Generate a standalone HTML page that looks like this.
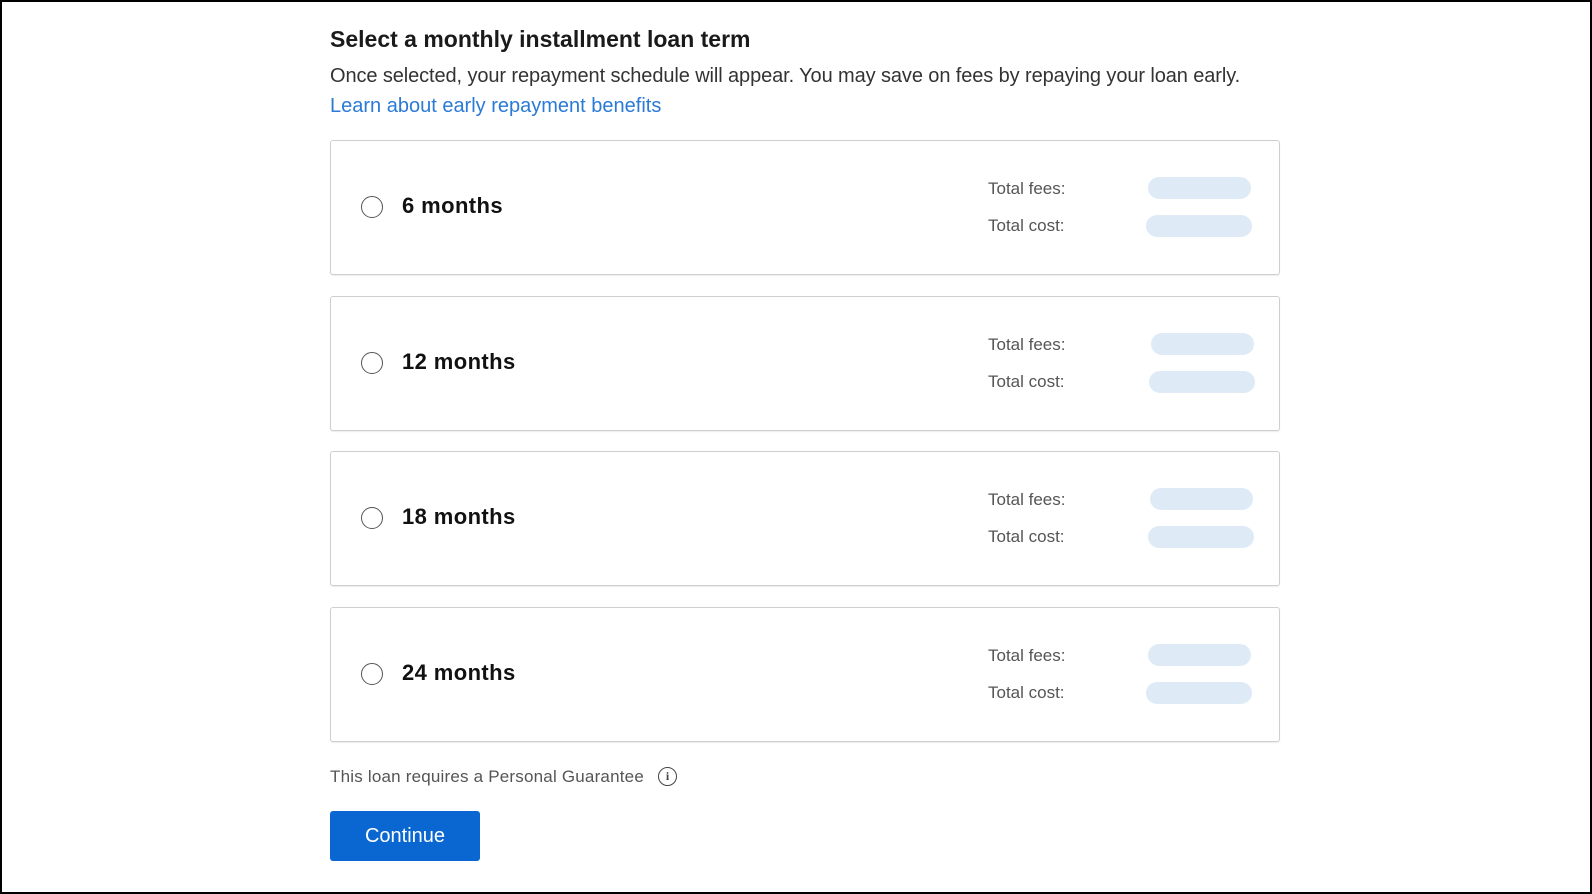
<!DOCTYPE html>
<html><head><meta charset="utf-8"><style>
html,body{margin:0;padding:0}
body{width:1592px;height:894px;background:#000;position:relative;overflow:hidden;font-family:"Liberation Sans",sans-serif}
.page{position:absolute;left:2px;top:2px;width:1588px;height:890px;background:#fff}
.abs{position:absolute;white-space:nowrap}
.title{left:328px;top:24px;font-size:23px;font-weight:bold;color:#1a1a1a}
.desc{left:328px;top:63px;font-size:20px;color:#333;letter-spacing:-0.1px}
.link{left:328px;top:93px;font-size:20px;color:#2a7ad6}
.card{position:absolute;left:328px;width:948px;height:133px;border:1px solid #cfcfcf;border-radius:3px;box-shadow:0 1px 1px rgba(0,0,0,.08)}
.radio{position:absolute;left:30px;top:55px;width:20px;height:20px;border:1.5px solid #555;border-radius:50%}
.lbl{position:absolute;left:71px;top:52px;font-size:22px;font-weight:bold;color:#111;letter-spacing:0.4px}
.tf{position:absolute;left:657px;top:38px;font-size:17px;color:#555}
.tc{position:absolute;left:657px;top:75px;font-size:17px;color:#555}
.p1{position:absolute;left:817px;top:36px;width:103px;height:22px;border-radius:11px;background:#deebf7}
.p2{position:absolute;left:815px;top:74px;width:106px;height:22px;border-radius:11px;background:#deebf7}
.note{left:328px;top:765px;font-size:17px;color:#555;letter-spacing:0.2px}
.info{position:absolute;left:656px;top:765px;width:17px;height:17px;border:1.5px solid #444;border-radius:50%;font-size:12px;font-weight:bold;text-align:center;line-height:17px;color:#444;font-family:"Liberation Serif",serif}
.btn{position:absolute;left:328px;top:809px;width:150px;height:50px;background:#0a66d0;border-radius:3px;color:#fff;font-size:20px;text-align:center;line-height:50px}
</style></head><body><div class="page">
<div class="abs title">Select a monthly installment loan term</div>
<div class="abs desc">Once selected, your repayment schedule will appear. You may save on fees by repaying your loan early.</div>
<div class="abs link">Learn about early repayment benefits</div>

<div class="card" style="top:138px"><div class="radio"></div><div class="lbl">6 months</div><div class="tf">Total fees:</div><div class="tc">Total cost:</div><div class="p1"></div><div class="p2"></div></div>
<div class="card" style="top:294px"><div class="radio"></div><div class="lbl">12 months</div><div class="tf">Total fees:</div><div class="tc">Total cost:</div><div class="p1" style="left:820px"></div><div class="p2" style="left:818px"></div></div>
<div class="card" style="top:449px"><div class="radio"></div><div class="lbl">18 months</div><div class="tf">Total fees:</div><div class="tc">Total cost:</div><div class="p1" style="left:819px"></div><div class="p2" style="left:817px"></div></div>
<div class="card" style="top:605px"><div class="radio"></div><div class="lbl">24 months</div><div class="tf">Total fees:</div><div class="tc">Total cost:</div><div class="p1"></div><div class="p2"></div></div>

<div class="abs note">This loan requires a Personal Guarantee</div>
<div class="info">i</div>
<div class="btn">Continue</div>
</div></body></html>
